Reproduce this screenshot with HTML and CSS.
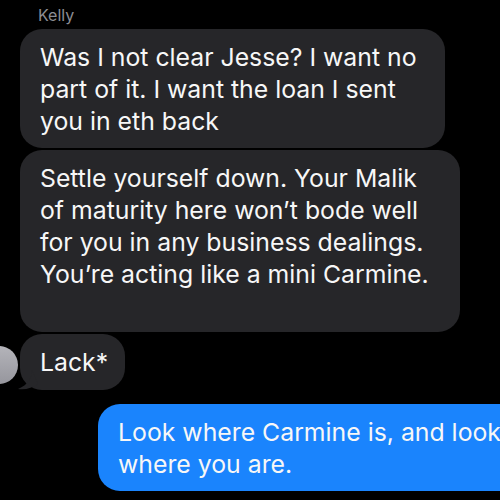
FILE: index.html
```html
<!DOCTYPE html>
<html>
<head>
<meta charset="utf-8">
<link rel="stylesheet" href="styles.css">
</head>
<body>
<div class="thread">
  <div class="sender">Kelly</div>
  <div class="bubble grey b1">Was I not clear Jesse? I want no<br>part of it. I want the loan I sent<br>you in eth back</div>
  <div class="bubble grey b2">Settle yourself down. Your Malik<br>of maturity here won’t bode well<br>for you in any business dealings.<br>You’re acting like a mini Carmine.</div>
  <div class="row-last">
    <div class="avatar"></div>
    <div class="bubble grey b3">Lack*
      <svg class="tail" width="22" height="20" viewBox="0 0 22 20"><path d="M16 0 C16 8 12 15 2 19 C10 20 16 18 22 14 Z" fill="#262629"/></svg>
    </div>
  </div>
  <div class="bubble blue b4">Look where Carmine is, and look<br>where you are.</div>
</div>
</body>
</html>
```
FILE: styles.css
```css
html, body {
  margin: 0;
  padding: 0;
  background: #000;
  width: 500px;
  height: 500px;
  overflow: hidden;
}
.thread {
  display: flex;
  flex-direction: column;
  align-items: flex-start;
  padding: 6px 0 0 20px;
  font-family: Inter, "Open Sans", sans-serif;
  color: #fff;
}
.sender {
  font-size: 16px;
  color: #8d8d93;
  margin-left: 18px;
  line-height: 18px;
  margin-bottom: 5px;
}
.bubble {
  font-size: 24.8px;
  line-height: 32px;
  border-radius: 22px;
  padding: 12px 20px 11px;
  box-sizing: border-box;
  white-space: nowrap;
  color: #f7f7f7;
}
.grey { background: #262629; }
.blue { background: #1a84fd; }
.b1 { width: 425px; margin-bottom: 2px; }
.b2 { width: 440px; padding-bottom: 42px; margin-bottom: 2px; }
.row-last {
  position: relative;
  display: flex;
}
.avatar {
  position: absolute;
  left: -40px;
  top: 12px;
  width: 38px;
  height: 38px;
  border-radius: 50%;
  background: linear-gradient(#b4b4ba, #96969d);
}
.b3 {
  position: relative;
  width: 105px;
  height: 56px;
}
.tail {
  position: absolute;
  left: -4px;
  bottom: 0;
}
.b4 {
  margin-top: 14px;
  margin-left: 78px;
  width: 430px;
  flex-shrink: 0;
  border-radius: 22px 0 0 22px;
  height: 87px;
}
```
